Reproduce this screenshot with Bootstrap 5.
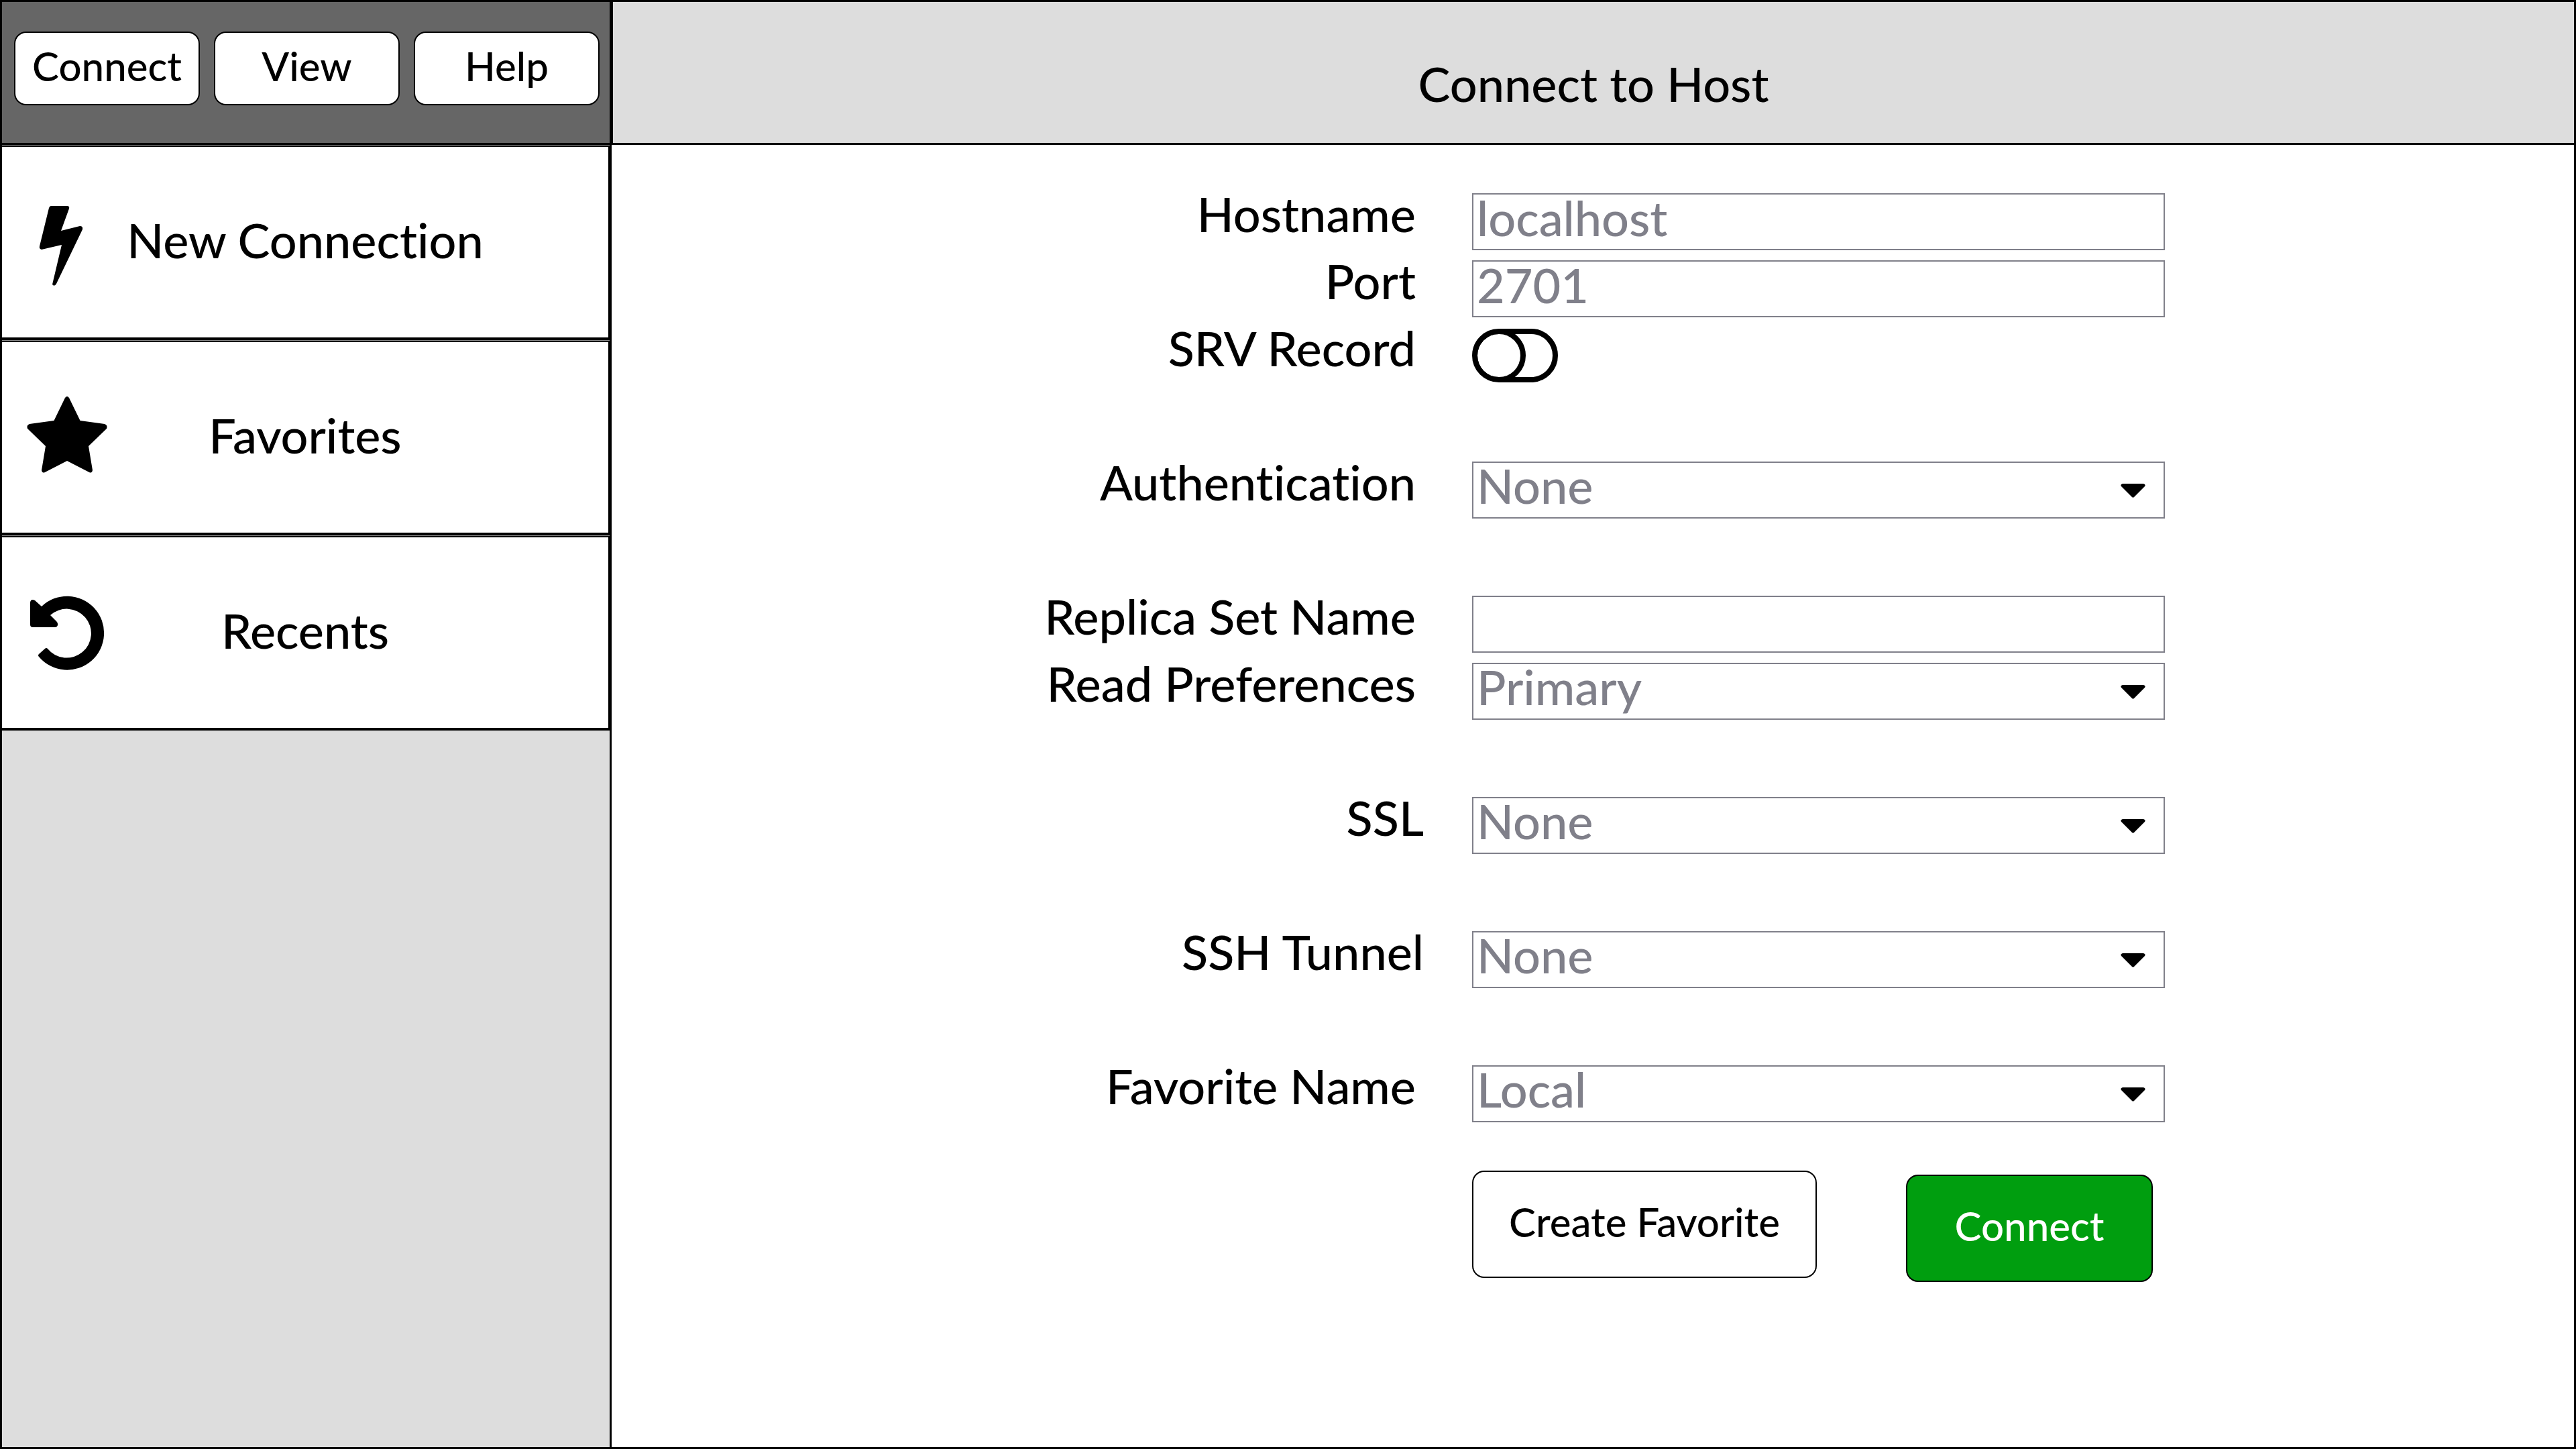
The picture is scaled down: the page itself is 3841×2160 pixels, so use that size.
<!DOCTYPE html>
<html lang="en">
<head>
<meta charset="utf-8">
<meta name="viewport" content="width=device-width, initial-scale=1">
<title>Connect to Host</title>
<link href="https://cdn.jsdelivr.net/npm/bootstrap@5.3.0/dist/css/bootstrap.min.css" rel="stylesheet">
<style>
  :root { --ink: #000; --panel: #ddd; --bar: #666; --muted: #80808a; --go: #009e0f; }
  body {
    font-family: Lato, "Open Sans", sans-serif;
    font-weight: 500; font-size: 72px; line-height: 60px;
    font-variant-ligatures: none;
    color: var(--ink); background: #fff;
  }
  .app-frame { border: 3px solid var(--ink); }

  /* Sidebar */
  .side-panel { flex: 0 0 909px; background: var(--panel); border-right: 3px solid var(--ink); }
  .menu-bar { height: 213px; padding: 44px 15px 0 18px; gap: 21px; background: var(--bar); border-bottom: 3px solid var(--ink); }
  .sketch-btn {
    --bs-btn-color: #000; --bs-btn-bg: #fff; --bs-btn-border-color: #000;
    --bs-btn-hover-color: #000; --bs-btn-hover-bg: #eee; --bs-btn-hover-border-color: #000;
    --bs-btn-font-size: 60px; --bs-btn-font-weight: 500; --bs-btn-line-height: 72px;
    --bs-btn-border-width: 2px; --bs-btn-border-radius: 18px;
    padding: 0 0 8px;
  }
  .menu-bar .sketch-btn { height: 110px; }
  .side-nav { gap: 1px; padding-top: 1px; background: #888; }
  .side-link {
    height: 290px; color: var(--ink); background: #fff; text-decoration: none;
    border: solid var(--ink); border-width: 2px 2px 4px 0;
  }
  .side-link svg { flex: 0 0 160px; height: 284px; }
  .side-link span { padding: 0 160px 8px 0; }

  /* Main area */
  .title-bar { height: 213px; padding-top: 32px; background: var(--panel); border: solid var(--ink); border-width: 0 0 3px 2px; }
  .title-bar h1 { font-size: 72px; line-height: 86px; font-weight: 500; }
  .host-form { padding-top: 72px; }
  .field-group { display: grid; gap: 15px; margin-bottom: 115px; }
  .field-group:last-of-type { margin-bottom: 72px; }
  .field-row { display: grid; grid-template-columns: 1283fr 1033fr 610fr; height: 85px; }
  .field-row label { text-align: right; padding-right: 84px; }
  .field-row label.label-wide { padding-right: 72px; }
  .field-row .form-control, .select-shell { height: 85px; border: 2px solid var(--muted); background: #fff; }
  .field-row .form-control, .field-row .form-select {
    color: var(--muted); border-radius: 0; font-size: 72px; font-weight: 500;
  }
  .field-row .form-control { padding: 0 5px 14px; line-height: 67px; }
  .select-shell { display: flex; align-items: flex-end; padding-bottom: 4px; }
  .field-row .form-select {
    height: 88px; flex: 0 0 100%; padding: 0 80px 0 5px; border: 0; line-height: 86px;
    background-color: transparent;
    background-image: url("data:image/svg+xml,%3Csvg xmlns='http://www.w3.org/2000/svg' viewBox='0 0 37 21'%3E%3Cpath d='M3 0H34Q38 1 36 4L20 20Q18.500 21.500 17 20L1 4Q-1 1 3 0Z'/%3E%3C/svg%3E");
    background-size: 37px 21px; background-position: right 27px top 42px;
  }
  .field-row .toggle-box {
    width: 128px; height: 80px; margin: 2px 0 0; border: 8px solid var(--ink); border-radius: 40px;
    background: #fff url("data:image/svg+xml,%3Csvg xmlns='http://www.w3.org/2000/svg' viewBox='0 0 80 80'%3E%3Ccircle cx='40' cy='40' r='36' fill='%23fff' stroke='%23000' stroke-width='8'/%3E%3C/svg%3E") left center / 80px 80px no-repeat border-box;
  }
  .field-row .toggle-box:checked { background-color: #fff; background-position: right center; }
  .form-actions { display: grid; grid-template-columns: 1283fr 1643fr; }
  .form-actions .sketch-btn { height: 160px; }
  .action-set { grid-column: 2; gap: 133px; }
  .btn-create { width: 514px; }
  .btn-go {
    width: 368px; margin-top: 6px;
    --bs-btn-color: #fff; --bs-btn-bg: var(--go);
    --bs-btn-hover-color: #fff; --bs-btn-hover-bg: #008a0d;
  }
  .group-last { margin-bottom: 72px; }
</style>
</head>
<body>
<div class="app-frame d-flex min-vh-100">
  <aside class="side-panel">
    <div class="menu-bar d-flex">
      <button type="button" class="btn sketch-btn flex-fill w-100">Connect</button>
      <button type="button" class="btn sketch-btn flex-fill w-100">View</button>
      <button type="button" class="btn sketch-btn flex-fill w-100">Help</button>
    </div>
    <nav class="side-nav d-flex flex-column" aria-label="Connections">
      <a href="#new" class="side-link d-flex align-items-center">
        <svg viewBox="3 219 160 284" aria-hidden="true"><path d="M76 307H100Q104 307 103 311L91 344L119 337Q124 337 123 342L84 423Q81 428 78 424L92 365L62 372Q58 371 59 367L73 310Q74 307 76 307Z"/></svg>
        <span class="flex-fill text-center">New Connection</span>
      </a>
      <a href="#favorites" class="side-link d-flex align-items-center">
        <svg viewBox="3 510 160 284" aria-hidden="true"><path d="M97 593Q100 589 103 593L119.500 627L156 632Q161 634 159 639L132 665L138 701Q137 706 133 704L100 687L67 704Q63 706 62 701L68 665L41 639Q39 634 44 632L80.500 627Z"/></svg>
        <span class="flex-fill text-center">Favorites</span>
      </a>
      <a href="#recents" class="side-link d-flex align-items-center">
        <svg viewBox="3 801 160 284" aria-hidden="true"><path d="M62 904A55 55 0 1 1 58 979Q56 977 58 975L67 967Q69 965 71 967A36.500 36.500 0 1 0 75 917L84 926Q87 929 86 932Q85 935 82 935H49Q45 935 45 931V898Q46 892 52 895Z"/></svg>
        <span class="flex-fill text-center">Recents</span>
      </a>
    </nav>
  </aside>

  <main class="flex-fill">
    <header class="title-bar d-flex align-items-center justify-content-center">
      <h1 class="m-0">Connect to Host</h1>
    </header>

    <form class="host-form">
      <div class="field-group">
        <div class="field-row">
          <label for="hostname">Hostname</label>
          <input id="hostname" type="text" class="form-control" value="localhost">
        </div>
        <div class="field-row">
          <label for="port">Port</label>
          <input id="port" type="text" class="form-control" value="2701">
        </div>
        <div class="field-row">
          <label for="srv">SRV Record</label>
          <input id="srv" type="checkbox" role="switch" class="form-check-input toggle-box">
        </div>
      </div>
      <div class="field-group">
        <div class="field-row">
          <label for="auth">Authentication</label>
          <div class="select-shell"><select id="auth" class="form-select"><option>None</option></select></div>
        </div>
      </div>
      <div class="field-group">
        <div class="field-row">
          <label for="replica">Replica Set Name</label>
          <input id="replica" type="text" class="form-control">
        </div>
        <div class="field-row">
          <label for="readpref">Read Preferences</label>
          <div class="select-shell"><select id="readpref" class="form-select"><option>Primary</option></select></div>
        </div>
      </div>
      <div class="field-group">
        <div class="field-row">
          <label for="ssl" class="label-wide">SSL</label>
          <div class="select-shell"><select id="ssl" class="form-select"><option>None</option></select></div>
        </div>
      </div>
      <div class="field-group">
        <div class="field-row">
          <label for="ssh" class="label-wide">SSH Tunnel</label>
          <div class="select-shell"><select id="ssh" class="form-select"><option>None</option></select></div>
        </div>
      </div>
      <div class="field-group group-last">
        <div class="field-row">
          <label for="favname">Favorite Name</label>
          <div class="select-shell"><select id="favname" class="form-select"><option>Local</option></select></div>
        </div>
      </div>
      <div class="form-actions">
        <div class="action-set d-flex align-items-start">
          <button type="button" class="btn sketch-btn btn-create">Create Favorite</button>
          <button type="submit" class="btn sketch-btn btn-go">Connect</button>
        </div>
      </div>
    </form>
  </main>
</div>
<script src="https://cdn.jsdelivr.net/npm/bootstrap@5.3.0/dist/js/bootstrap.bundle.min.js"></script>
</body>
</html>
